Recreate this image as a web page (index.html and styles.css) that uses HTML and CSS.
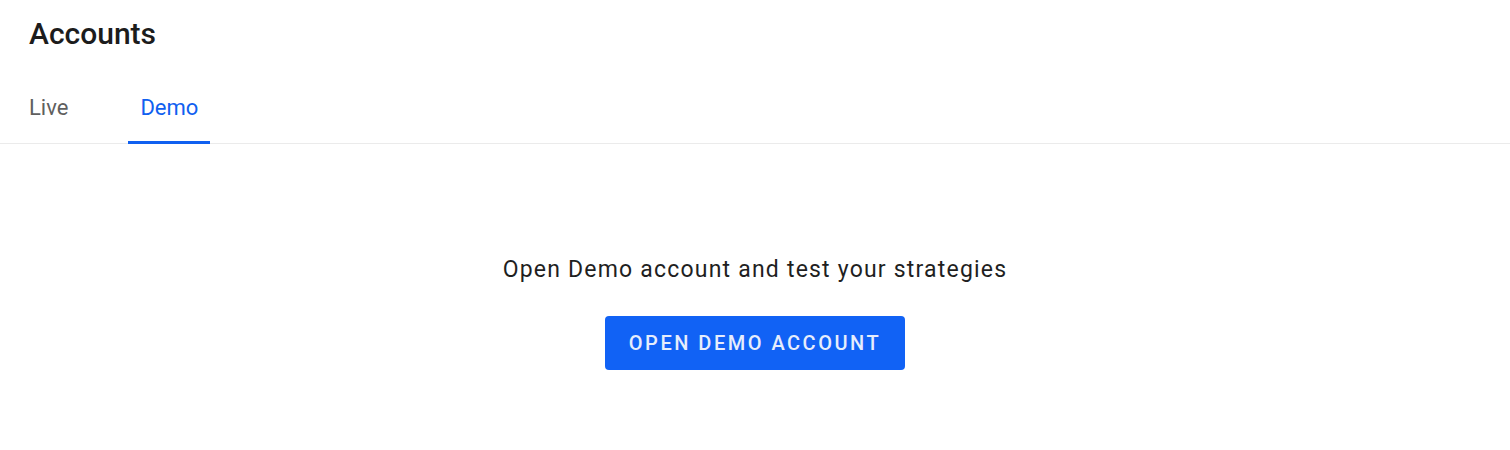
FILE: index.html
```html
<!DOCTYPE html>
<html lang="en">
  <head>
    <meta charset="UTF-8" />
    <meta name="viewport" content="width=device-width, initial-scale=1.0" />
    <title>Accounts</title>
    <link rel="stylesheet" href="styles.css">
  </head>
  <body>
    <div class="page">
      <h1 class="title">Accounts</h1>
      <div class="tabs">
        <button class="tab">Live</button>
        <button class="tab tab-active">Demo</button>
      </div>

      <div class="empty">
        <p class="empty-text">Open Demo account and test your strategies</p>
        <button class="open-btn">Open Demo Account</button>
      </div>
    </div>
  </body>
</html>
```

FILE: styles.css
```css
body {
  font-family: Roboto, "Noto Sans", sans-serif;
  background-color: #ffffff;
  margin: 0;
  padding: 0;
  color: #1f1f1f;
}

.page {
  width: 100%;
}

.title {
  font-size: 30px;
  font-weight: 500;
  color: #1c1c1c;
  margin: 0;
  padding: 15px 29px 0;
  line-height: 38px;
}

.tabs {
  display: flex;
  gap: 48px;
  margin-top: 17px;
  padding-left: 17px;
  border-bottom: 1px solid #ebebeb;
}

.tab {
  font-family: inherit;
  font-size: 22px;
  background: none;
  border: none;
  color: #5f5f5f;
  padding: 4px 12px 0;
  height: 74px;
  margin-bottom: -1px;
  border-bottom: 3px solid transparent;
  cursor: pointer;
}

.tab-active {
  color: #1060f0;
  border-bottom-color: #1060f0;
  border-radius: 2px 2px 0 0;
}

.empty {
  display: flex;
  flex-direction: column;
  align-items: center;
  padding-top: 112px;
}

.empty-text {
  font-size: 23px;
  line-height: 28px;
  letter-spacing: 1.2px;
  margin: 0 0 32px;
  color: #1f1f1f;
}

.open-btn {
  font-family: inherit;
  font-size: 20px;
  font-weight: 500;
  text-transform: uppercase;
  letter-spacing: 2.5px;
  color: #e6edfc;
  background-color: #1162f5;
  border: none;
  border-radius: 4px;
  width: 300px;
  height: 54px;
  cursor: pointer;
}
```
